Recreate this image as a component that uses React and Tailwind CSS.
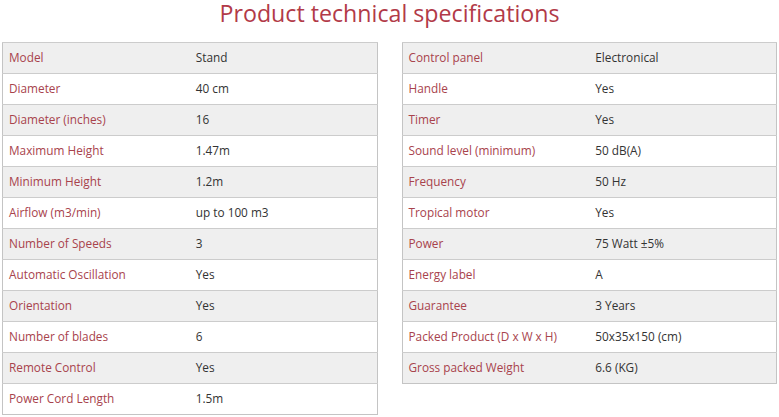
import React from 'react';

const left = [
  ['Model', 'Stand'],
  ['Diameter', '40 cm'],
  ['Diameter (inches)', '16'],
  ['Maximum Height', '1.47m'],
  ['Minimum Height', '1.2m'],
  ['Airflow (m3/min)', 'up to 100 m3'],
  ['Number of Speeds', '3'],
  ['Automatic Oscillation', 'Yes'],
  ['Orientation', 'Yes'],
  ['Number of blades', '6'],
  ['Remote Control', 'Yes'],
  ['Power Cord Length', '1.5m'],
];

const right = [
  ['Control panel', 'Electronical'],
  ['Handle', 'Yes'],
  ['Timer', 'Yes'],
  ['Sound level (minimum)', '50 dB(A)'],
  ['Frequency', '50 Hz'],
  ['Tropical motor', 'Yes'],
  ['Power', '75 Watt ±5%'],
  ['Energy label', 'A'],
  ['Guarantee', '3 Years'],
  ['Packed Product (D x W x H)', '50x35x150 (cm)'],
  ['Gross packed Weight', '6.6 (KG)'],
];

const SpecTable = ({ rows }) => (
  <table className="w-full border-collapse border border-[#c4c4c4] text-[11.8px] leading-none">
    <tbody>
      {rows.map(([label, value], i) => (
        <tr key={label} className={i % 2 === 0 ? 'bg-[#efefef]' : 'bg-white'}>
          <td className="w-1/2 h-[31px] border-t border-[#cccccc] pl-[6px] text-[#a8434c]">{label}</td>
          <td className="w-1/2 h-[31px] border-t border-[#cccccc] pl-[6px] text-[#333333]">{value}</td>
        </tr>
      ))}
    </tbody>
  </table>
);

export default function App() {
  return (
    <div className="w-[779px] h-[417px] bg-white overflow-hidden" style={{ fontFamily: '"Open Sans", "Noto Sans", sans-serif' }}>
      <h1 className="text-center text-[23.2px] leading-[26px] h-[42px] text-[#b23a48] font-normal">
        Product technical specifications
      </h1>
      <div className="grid grid-cols-2 gap-[24px] px-[2px] items-start">
        <SpecTable rows={left} />
        <SpecTable rows={right} />
      </div>
    </div>
  );
}
